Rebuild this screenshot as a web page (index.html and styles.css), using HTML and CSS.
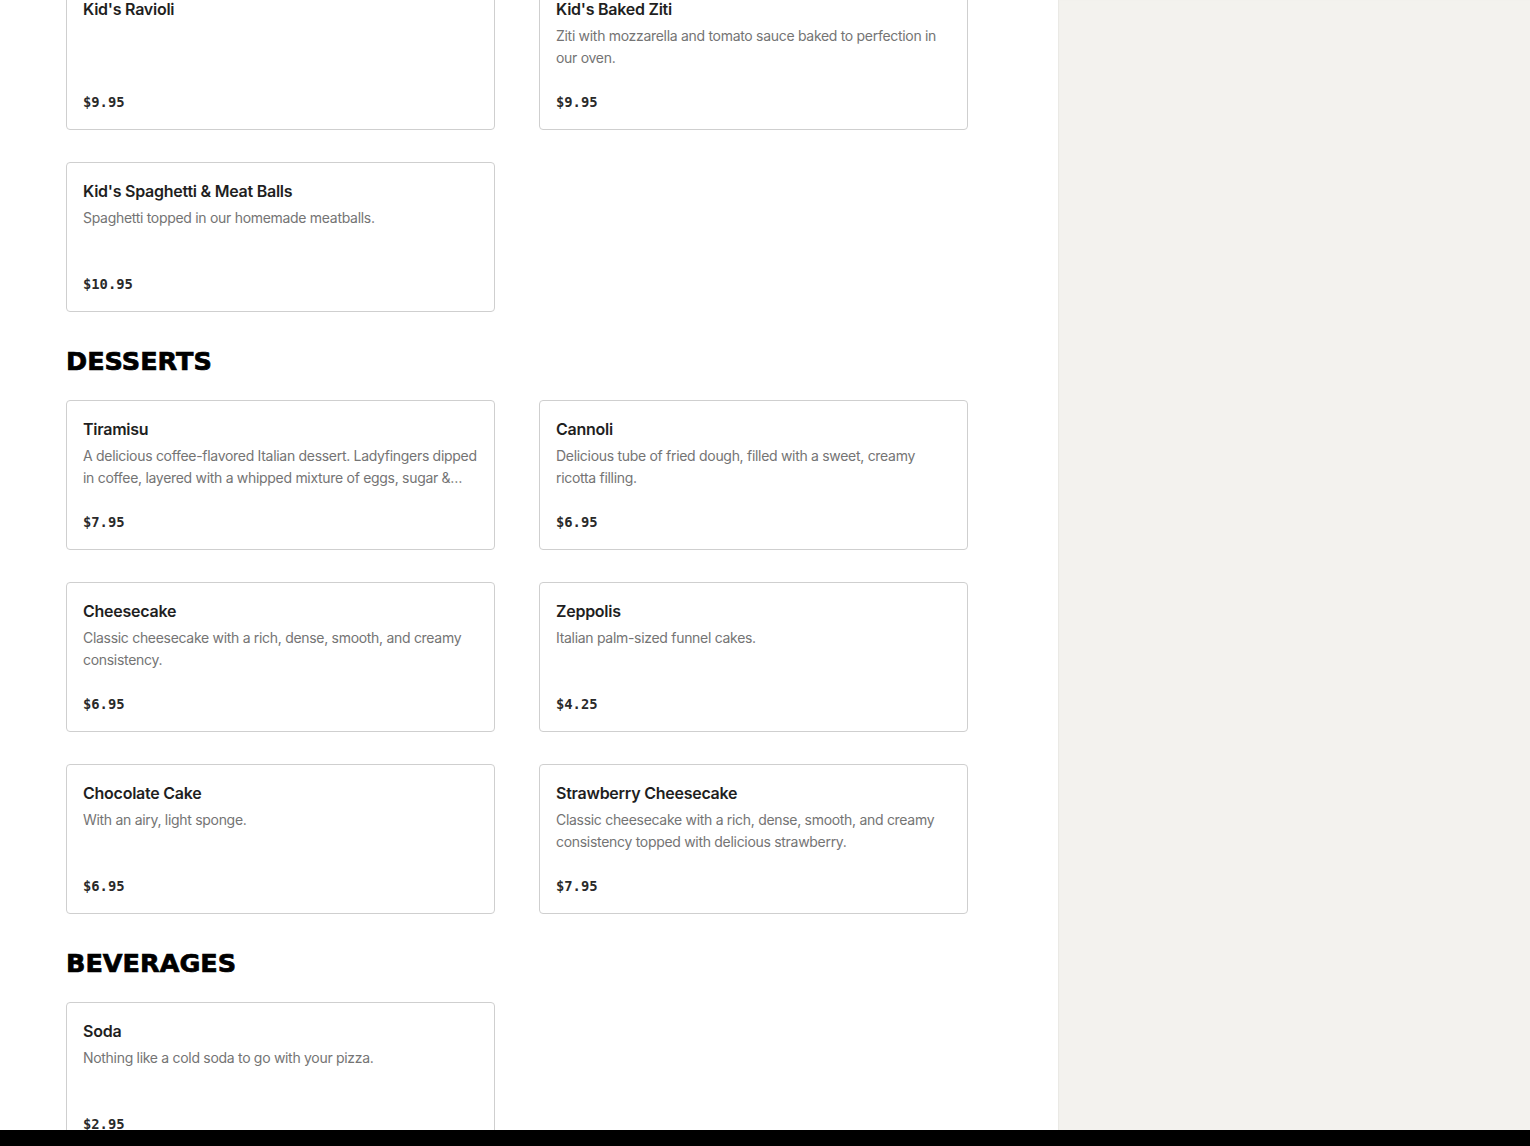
FILE: index.html
```html
<!DOCTYPE html>
<html lang="en">
<head>
<meta charset="utf-8">
<title>Menu</title>
<link rel="stylesheet" href="styles.css">
</head>
<body>
<div class="page">
  <main class="menu">
    <section class="section section-first">
      <div class="grid">
        <article class="card">
          <h3 class="title">Kid's Ravioli</h3>
          <p class="desc"></p>
          <div class="price">$9.95</div>
        </article>
        <article class="card">
          <h3 class="title">Kid's Baked Ziti</h3>
          <p class="desc">Ziti with mozzarella and tomato sauce baked to perfection in our oven.</p>
          <div class="price">$9.95</div>
        </article>
        <article class="card">
          <h3 class="title">Kid's Spaghetti &amp; Meat Balls</h3>
          <p class="desc">Spaghetti topped in our homemade meatballs.</p>
          <div class="price">$10.95</div>
        </article>
      </div>
    </section>

    <section class="section">
      <h2 class="heading">DESSERTS</h2>
      <div class="grid">
        <article class="card">
          <h3 class="title">Tiramisu</h3>
          <p class="desc">A delicious coffee-flavored Italian dessert. Ladyfingers dipped in coffee, layered with a whipped mixture of eggs, sugar &amp; mascarpone cheese, flavored with cocoa.</p>
          <div class="price">$7.95</div>
        </article>
        <article class="card">
          <h3 class="title">Cannoli</h3>
          <p class="desc">Delicious tube of fried dough, filled with a sweet, creamy ricotta filling.</p>
          <div class="price">$6.95</div>
        </article>
        <article class="card">
          <h3 class="title">Cheesecake</h3>
          <p class="desc">Classic cheesecake with a rich, dense, smooth, and creamy consistency.</p>
          <div class="price">$6.95</div>
        </article>
        <article class="card">
          <h3 class="title">Zeppolis</h3>
          <p class="desc">Italian palm-sized funnel cakes.</p>
          <div class="price">$4.25</div>
        </article>
        <article class="card">
          <h3 class="title">Chocolate Cake</h3>
          <p class="desc">With an airy, light sponge.</p>
          <div class="price">$6.95</div>
        </article>
        <article class="card">
          <h3 class="title">Strawberry Cheesecake</h3>
          <p class="desc">Classic cheesecake with a rich, dense, smooth, and creamy consistency topped with delicious strawberry.</p>
          <div class="price">$7.95</div>
        </article>
      </div>
    </section>

    <section class="section">
      <h2 class="heading">BEVERAGES</h2>
      <div class="grid">
        <article class="card">
          <h3 class="title">Soda</h3>
          <p class="desc">Nothing like a cold soda to go with your pizza.</p>
          <div class="price">$2.95</div>
        </article>
      </div>
    </section>
  </main>
  <aside class="side"></aside>
</div>
<div class="bottom-bar"></div>
</body>
</html>
```

FILE: styles.css
```css
* { box-sizing: border-box; }

html, body {
  margin: 0;
  padding: 0;
  background: #ffffff;
}

body {
  font-family: "Inter", "Liberation Sans", sans-serif;
  color: #222222;
  overflow: hidden;
  height: 1146px;
}

.page {
  display: flex;
  min-height: 1146px;
}

.menu {
  width: 1058px;
  flex: 0 0 1058px;
  padding: 0 91px 40px 66px;
  margin-top: -20px;
}

.side {
  flex: 1;
  background: #f3f2ee;
  box-shadow: inset 1px 0 1px rgba(0,0,0,0.04);
}

.section + .section {
  margin-top: 31px;
}

.heading {
  margin: 0 0 21px;
  font-family: "DejaVu Sans", "Liberation Sans", sans-serif;
  font-weight: 900;
  font-size: 25.5px;
  line-height: 36px;
  letter-spacing: 0;
  color: #000000;
  -webkit-text-stroke: 0.7px #000000;
}

.grid {
  display: grid;
  grid-template-columns: 429px 429px;
  column-gap: 44px;
  row-gap: 32px;
}

.card {
  height: 150px;
  border: 1px solid #cfcfcf;
  border-radius: 4px;
  padding: 16px;
  background: #ffffff;
  display: flex;
  flex-direction: column;
}

.title {
  margin: 0;
  font-size: 16px;
  line-height: 24px;
  font-weight: 600;
  color: #1f1f1f;
  letter-spacing: -0.25px;
}

.desc {
  margin: 4px 0 0;
  font-size: 14px;
  line-height: 22px;
  height: 44px;
  color: #747474;
  letter-spacing: -0.3px;
  overflow: hidden;
  display: -webkit-box;
  -webkit-line-clamp: 2;
  -webkit-box-orient: vertical;
}

.price {
  margin-top: 22px;
  font-family: "DejaVu Sans Mono", "Liberation Mono", monospace;
  font-weight: 700;
  font-size: 13.8px;
  line-height: 22px;
  color: #2a2a2a;
}

.bottom-bar {
  position: fixed;
  left: 0;
  right: 0;
  bottom: 0;
  height: 16px;
  background: #000000;
}
```
